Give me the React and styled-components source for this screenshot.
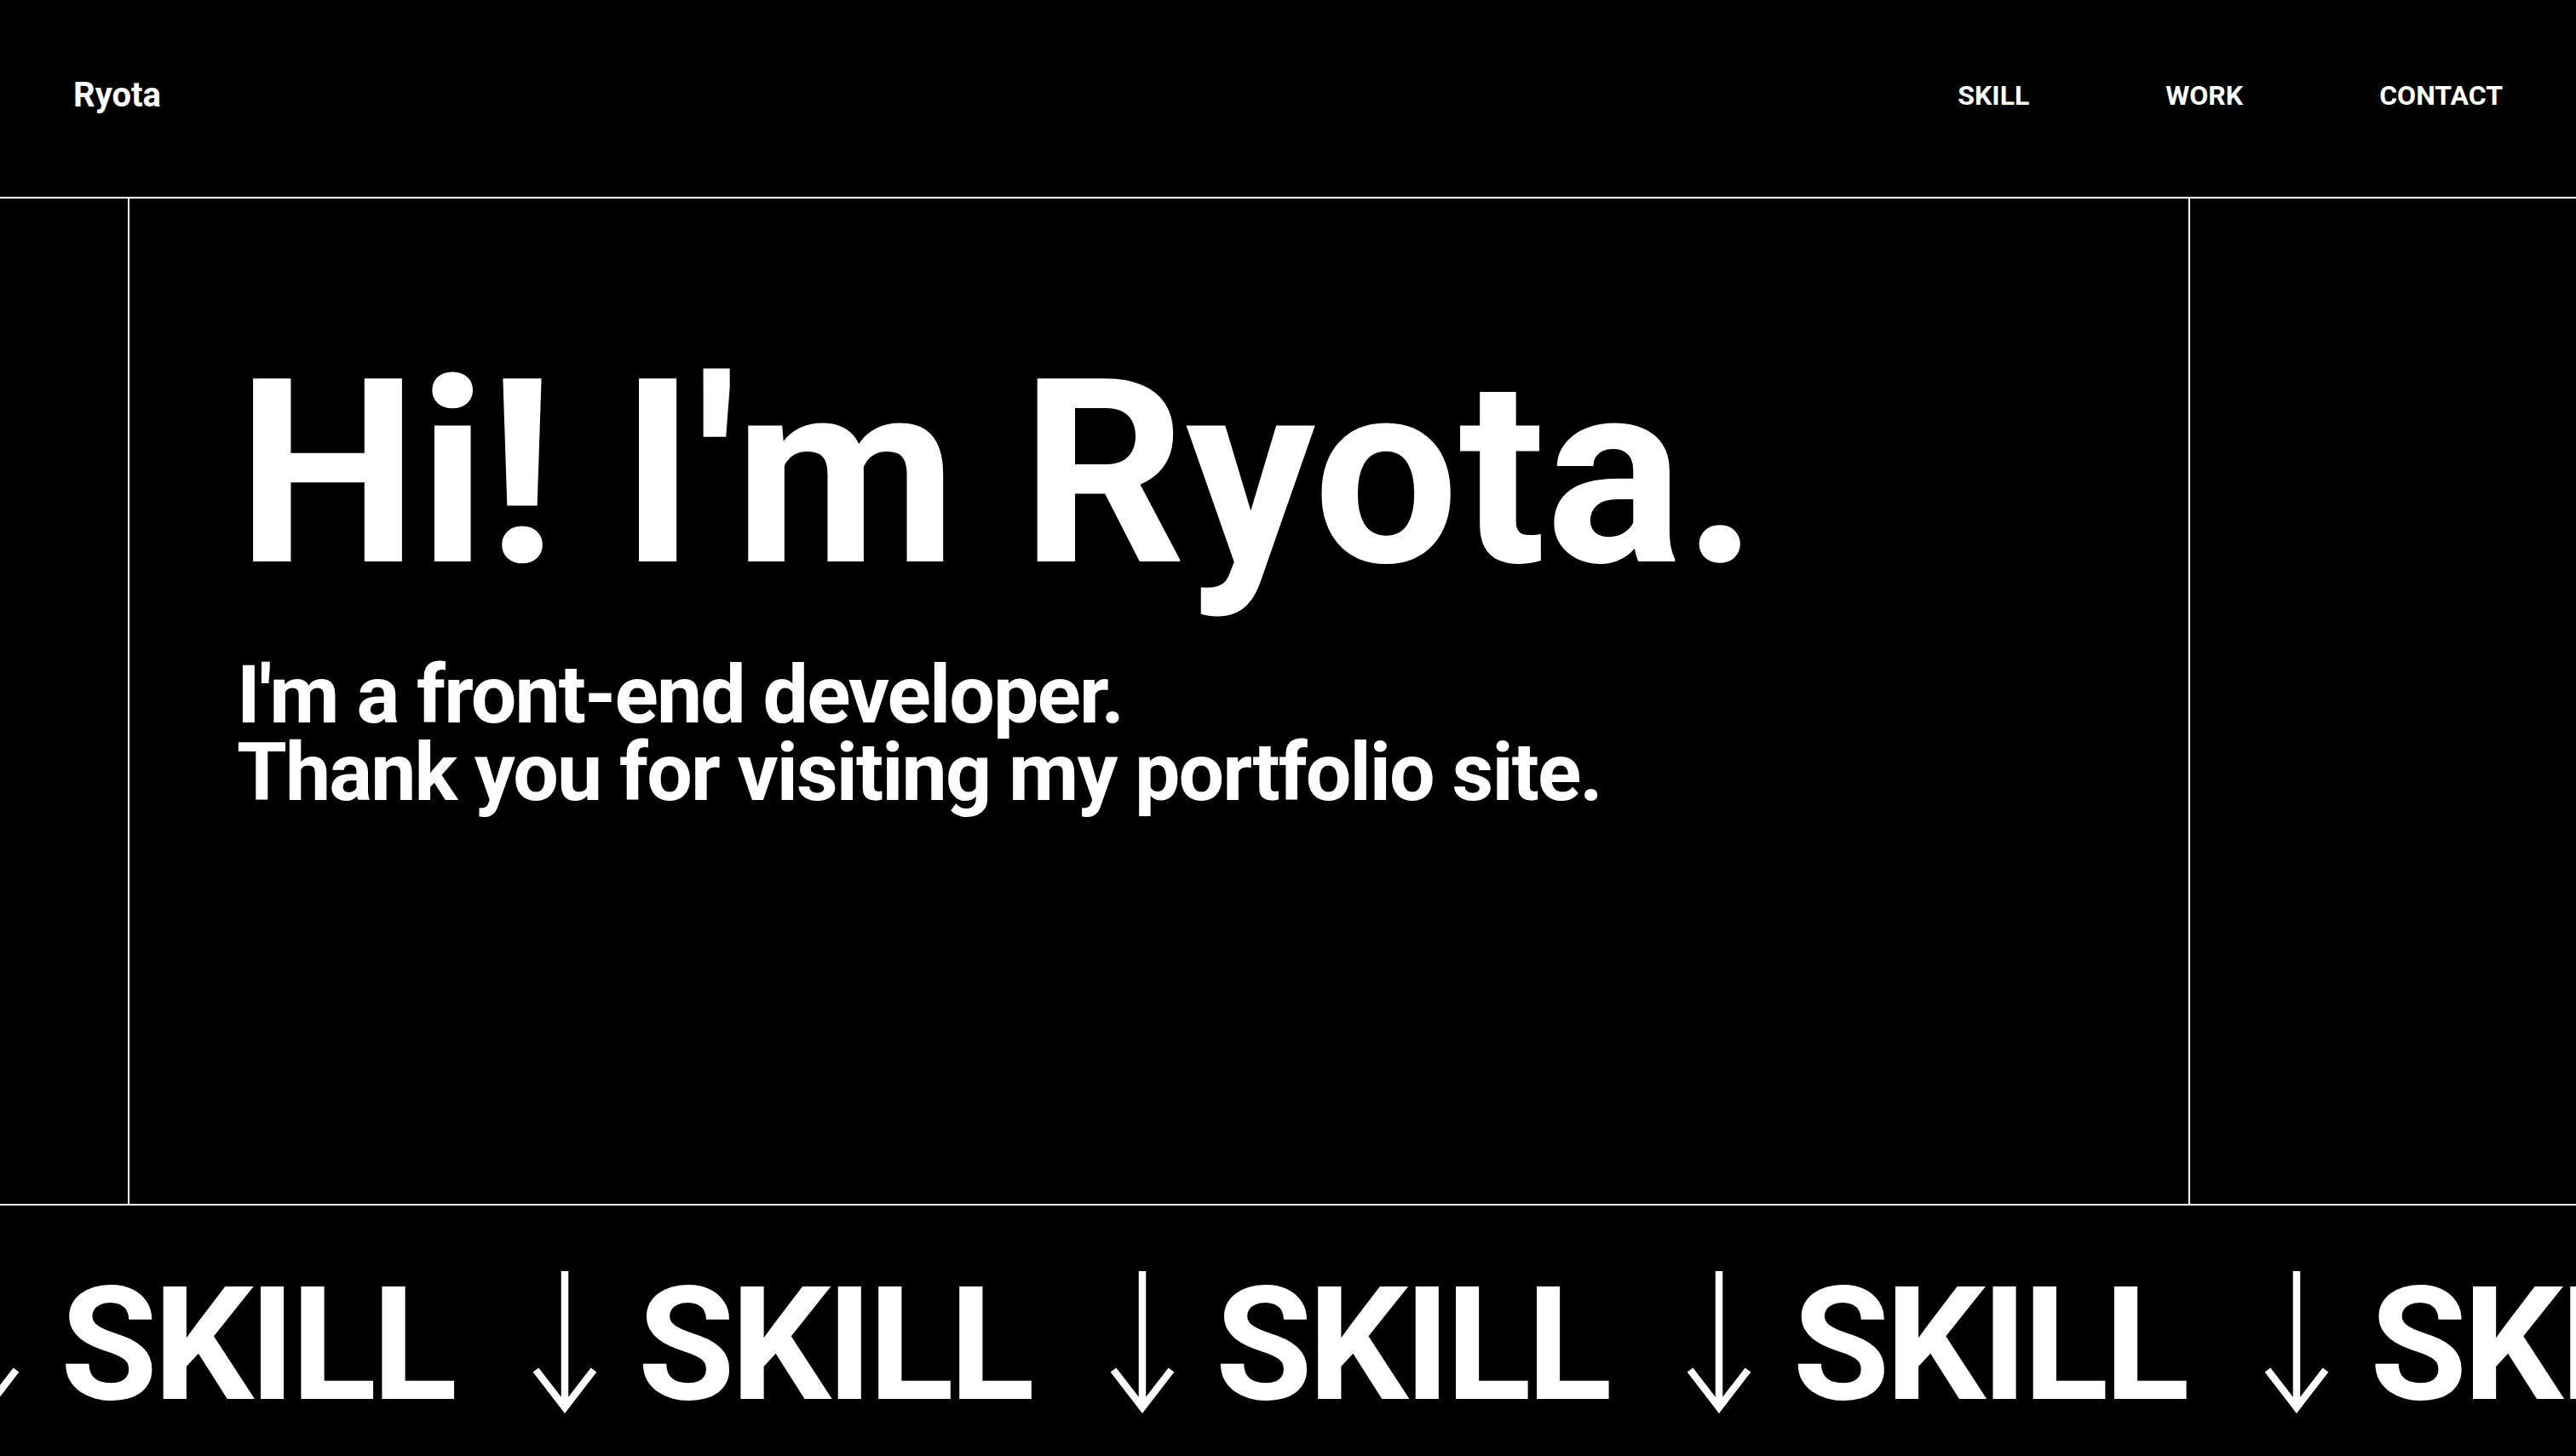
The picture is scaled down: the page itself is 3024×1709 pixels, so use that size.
import React from 'react';
import styled, { createGlobalStyle } from 'styled-components';

const GlobalStyle = createGlobalStyle`
  html, body {
    margin: 0;
    padding: 0;
    background: #000;
    color: #fff;
    font-family: Roboto, "Liberation Sans", sans-serif;
    overflow: hidden;
  }
  * {
    box-sizing: border-box;
  }
`;

const Page = styled.div`
  height: 100vh;
  display: flex;
  flex-direction: column;
  background: #000;
`;

const Header = styled.header`
  height: 233px;
  flex-shrink: 0;
  display: flex;
  justify-content: space-between;
  align-items: center;
  padding: 0 86px 8px 86px;
  border-bottom: 2px solid #fff;
`;

const Logo = styled.a`
  font-size: 40px;
  font-weight: 700;
  color: #fff;
  text-decoration: none;
`;

const Nav = styled.nav`
  display: flex;
  gap: 160px;
`;

const NavLink = styled.a`
  font-size: 32px;
  font-weight: 700;
  color: #fff;
  text-decoration: none;
  text-transform: uppercase;
`;

const Hero = styled.section`
  flex: 1;
  display: grid;
  grid-template-columns: 150px 1fr 453px;
`;

const Side = styled.div``;

const Main = styled.div`
  border-left: 2px solid #fff;
  border-right: 2px solid #fff;
  padding: 172px 0 0 126px;
`;

const Title = styled.h1`
  margin: 0;
  font-size: 302px;
  font-weight: 700;
  line-height: 1;
  white-space: nowrap;
`;

const Lead = styled.p`
  margin: 63px 0 0;
  font-size: 95px;
  font-weight: 700;
  line-height: 91px;
  letter-spacing: -1.9px;
`;

const Marquee = styled.section`
  height: 296px;
  flex-shrink: 0;
  border-top: 2px solid #fff;
  overflow: hidden;
  padding-top: 71px;
`;

const Track = styled.div`
  display: flex;
  gap: 91px;
  transform: translateX(-55px);
`;

const Item = styled.div`
  display: flex;
  align-items: flex-start;
  gap: 46px;
  flex-shrink: 0;
`;

const ItemText = styled.span`
  font-size: 185px;
  font-weight: 700;
  line-height: 1;
  letter-spacing: -5px;
  white-space: nowrap;
`;

const ArrowIcon = styled.svg`
  width: 80px;
  height: 168px;
  margin-top: 6px;
  flex-shrink: 0;
`;

const Arrow = () => (
  <ArrowIcon viewBox="0 0 80 168" fill="none" stroke="#fff" strokeWidth="8.5">
    <path d="M40 0V160" />
    <path d="M6 116L40 160L74 116" strokeLinejoin="miter" />
  </ArrowIcon>
);

const navItems = ['Skill', 'Work', 'Contact'];

export default function App() {
  return (
    <Page>
      <GlobalStyle />
      <Header>
        <Logo href="#">Ryota</Logo>
        <Nav>
          {navItems.map((item) => (
            <NavLink key={item} href={`#${item.toLowerCase()}`}>
              {item}
            </NavLink>
          ))}
        </Nav>
      </Header>

      <Hero>
        <Side />
        <Main>
          <Title>Hi! I'm Ryota.</Title>
          <Lead>
            I'm a front-end developer.
            <br />
            Thank you for visiting my portfolio site.
          </Lead>
        </Main>
        <Side />
      </Hero>

      <Marquee>
        <Track>
          {Array.from({ length: 6 }).map((_, i) => (
            <Item key={i}>
              <Arrow />
              <ItemText>SKILL</ItemText>
            </Item>
          ))}
        </Track>
      </Marquee>
    </Page>
  );
}
